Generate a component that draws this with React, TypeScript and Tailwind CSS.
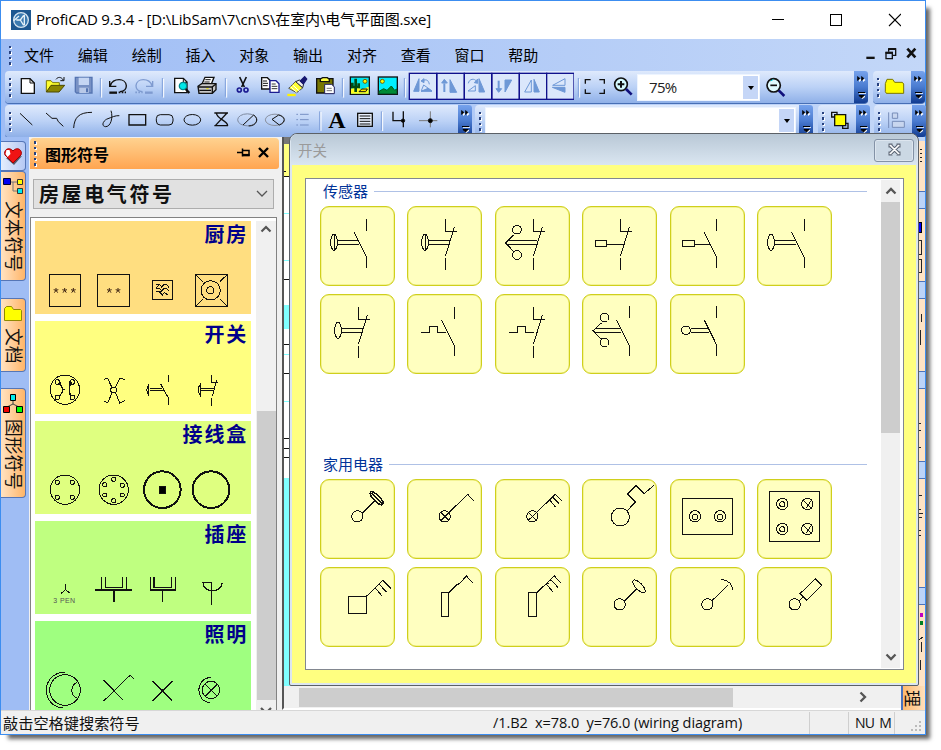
import React from 'react';

type Origin = [number, number];
const A: Origin = [0, 0];
const B: Origin = [310, 30];
const C: Origin = [620, 0];

/* Drawing cell: the artwork inside uses a grid of three units per pixel. */
function Cell({ x, y, w, h, o = A, children }: { x: number; y: number; w: number; h: number; o?: Origin; children?: React.ReactNode }) {
  return (
    <svg
      className="block shrink-0"
      width={w}
      height={h}
      viewBox={`${(x - o[0]) * 3} ${(y - o[1]) * 3} ${w * 3} ${h * 3}`}
      fill="none"
      stroke="#111"
      strokeWidth={3}
    >
      {children}
    </svg>
  );
}

function T1({ x, w, o, children }: { x: number; w: number; o?: Origin; children?: React.ReactNode }) {
  return <Cell x={x} y={71} w={w} h={32} o={o}>{children}</Cell>;
}
function T2({ x, w, o, children }: { x: number; w: number; o?: Origin; children?: React.ReactNode }) {
  return <Cell x={x} y={105} w={w} h={32} o={o}>{children}</Cell>;
}

function Grip({ n = 4 }: { n?: number }) {
  return (
    <div className="flex w-[9px] shrink-0 flex-col items-center justify-center gap-[3px] pl-[1px]">
      {Array.from({ length: n }, (_, i) => (
        <i key={i} className="block h-[2.5px] w-[2.5px] bg-[#27417f] shadow-[1px_1px_0_#fff]" />
      ))}
    </div>
  );
}

function Overflow() {
  return (
    <div className="h-full w-[14px] shrink-0 rounded-r-[3px] bg-linear-to-b from-[#76a2ec] via-[#4a7bd0] to-[#123c92]">
      <svg width="14" height="32" viewBox="0 0 14 32">
        <path d="M4 6v4l2.500-2zM8 6v4l2.500-2z" fill="#fff" transform="translate(1 1)" />
        <path d="M3.500 5.500v4l2.500-2zM7.500 5.500v4l2.500-2z" fill="#000" stroke="#000" strokeWidth=".6" />
        <path d="M5 22.500h7M6 25.500h5l-2.500 2z" fill="#fff" stroke="#fff" strokeWidth=".8" />
        <path d="M4 21.500h7M5 24.500h5l-2.500 2.500z" fill="#000" stroke="#000" strokeWidth="1" />
      </svg>
    </div>
  );
}

const bar = 'flex h-[32px] shrink-0 rounded-[4px] bg-linear-to-b from-[#dfeafc] via-[#bcd2f6] to-[#8fb0e8] shadow-[0_1px_0_#476fb5]';

const Sep = ({ x, o = A }: { x: number; o?: Origin }) => {
  const px = (x - o[0]) * 3 + 1;
  const py = (71 - o[1]) * 3;
  return (
    <>
      <path d={`M${px} ${py + 21}v56`} stroke="#7f9fda" />
      <path d={`M${px + 4} ${py + 24}v56`} stroke="#fff" />
    </>
  );
};

function TitleBar() {
  return (
    <div className="flex h-[38px] shrink-0 items-center bg-white pl-[10px]">
      <svg width="20" height="20" viewBox="0 0 60 60">
        <rect width="60" height="60" fill="#1d5790" />
        <circle cx="30" cy="30" r="22" fill="#3b7ab0" stroke="#d5e4f0" strokeWidth="4" />
        <path d="M8 32l16-14M16 30h12M28 30l10-14M28 30l10 16M40 14v32" stroke="#e6f1f8" strokeWidth="4" fill="none" />
      </svg>
      <span className="ml-[5px] w-[700px] whitespace-nowrap pb-[2px] font-['Open_Sans','Noto_Sans_CJK_SC',sans-serif] text-[15px] tracking-[-0.150px] text-black">
        ProfiCAD 9.3.4 - [D:\LibSam\7\cn\S\在室内\电气平面图.sxe]
      </span>
      <svg className="ml-auto mr-[24px] shrink-0" width="131" height="14" viewBox="0 0 131 14" fill="none" stroke="#000" shapeRendering="crispEdges">
        <path d="M2 6.500h12M60.500 1.500h11v11h-11z" />
        <path d="M119 1l12 12M131 1l-12 12" shapeRendering="auto" strokeWidth="1.100" />
      </svg>
    </div>
  );
}

function MenuBar() {
  const items = ['文件', '编辑', '绘制', '插入', '对象', '输出', '对齐', '查看', '窗口', '帮助'];
  return (
    <div className="flex h-[32px] shrink-0 items-center pl-[4px]">
      <Grip />
      <div className="flex gap-[23.800px] pb-[2px] pl-[10px] text-[15px] text-black">
        {items.map((t) => <span key={t}>{t}</span>)}
      </div>
      <div className="ml-auto">
        <Cell x={860} y={39} w={65} h={32} o={C}>
          <path d="M739 173.500h25" strokeWidth="7" />
          <path d="M806 155v-8h21v19h-8" strokeWidth="4" /><path d="M805 147h23" strokeWidth="6" />
          <path d="M798 159h19v17h-19z" strokeWidth="4" /><path d="M796 158h23" strokeWidth="6" />
          <path d="M862 146l24 26M886 146l-24 26" strokeWidth="8" />
        </Cell>
      </div>
    </div>
  );
}

function Flip({ x, children }: { x: number; children: React.ReactNode }) {
  return (
    <g transform={`translate(${x} 0)`}>
      <rect x="298" y="130" width="82" height="78" fill="#dbe7fb" stroke="#10108c" strokeWidth="4" />
      <g fill="#6e98d6" stroke="#6e98d6" strokeWidth="3">{children}</g>
    </g>
  );
}

function ToolbarOne() {
  return (
    <div className="flex h-[34px] shrink-0 pl-[4px]">
      <div className={`${bar} w-[863px]`}>
        <Grip />
        <T1 x={14} w={85}>
          <path d="M64 236h26l13 13v31H64z" fill="#fff" strokeWidth="4" /><path d="M90 236v13h13" strokeWidth="3" />
          <path d="M139 275v-33h14l5 6h20v8" fill="#ffff30" stroke="#7c7800" />
          <path d="M139 276l14-20h41l-17 20z" fill="#8b8600" stroke="#4b4800" />
          <path d="M168 238c6-8 15-8 22 2M192 231v11h-11" />
          <path d="M226 232h50v47h-46l-4-4z" fill="#7891c4" stroke="#5675b2" strokeWidth="4" />
          <path d="M236 233h31v22h-31z" fill="#c6d6f3" stroke="none" /><path d="M238 263h28v16h-28z" fill="#b9c9e8" stroke="none" /><path d="M258 265h6v12h-6z" fill="#5675b2" stroke="none" />
        </T1>
        <T1 x={99} w={70}>
          <Sep x={100} />
          <path d="M331 257c8-24 46-24 48 0 0 12-8 17-19 18M329 243v16h20" strokeWidth="4" /><path d="M328 278h23" strokeWidth="7" /><path d="M356 277h22" strokeDasharray="5 4" strokeWidth="5" />
          <g stroke="#7f9bd0"><path d="M456 257c-8-24-46-24-48 0 0 12 8 17 19 18M458 243v16h-20" strokeWidth="4" /><path d="M435 278h23" strokeWidth="7" /><path d="M406 277h22" strokeDasharray="5 4" strokeWidth="5" /></g>
          <Sep x={162} />
        </T1>
        <T1 x={169} w={60}>
          <path d="M524 235h26l11 11v32h-37z" fill="#fff" strokeWidth="4" /><path d="M550 235v12h11" />
          <circle cx="549" cy="258" r="11" fill="#00e8e8" stroke="#008b91" strokeWidth="4" /><path d="M557 267l11 12" strokeWidth="7" />
          <path d="M606 252l9-20h27l-8 20z" fill="#fff" strokeWidth="4" /><path d="M616 239h16M613 246h16" />
          <path d="M594 259l11-8h43v18l-11 11h-40z" fill="#c8c8c8" strokeWidth="4" /><path d="M594 261h42l12-9M637 261v18M598 271h35" strokeWidth="4" /><path d="M619 266h7" stroke="#e9e200" />
          <Sep x={225} />
        </T1>
        <T1 x={229} w={57}>
          <path d="M719 231l14 30M739 231l-14 30" strokeWidth="5" /><g stroke="#1b1b91" strokeWidth="5"><circle cx="718" cy="270" r="6" /><circle cx="738" cy="270" r="6" /></g>
          <path d="M785 233h17l8 8v26h-25z" fill="#fff" strokeWidth="4" /><path d="M789 243h12M789 250h15M789 257h14" />
          <path d="M810 242h18l9 9v26h-27z" fill="#fff" stroke="#1b1b91" strokeWidth="4" /><path d="M815 252h12M815 259h17M815 266h17" stroke="#333" />
        </T1>
        <T1 x={286} w={24}>
          <path d="M862 285h25" stroke="#fff200" strokeWidth="7" />
          <path d="M887 244l21 20-18 14-24-13z" fill="#ffff31" stroke="#555" /><path d="M878 255l22 20M872 260l18 17" stroke="#fff" /><path d="M887 245l11-5 13 12-3 11z" fill="#eee" stroke="#222" /><path d="M901 243l13-13 6 7-10 15z" fill="#17176f" stroke="#17176f" strokeWidth="4" />
        </T1>
        <T1 x={310} w={98} o={B}>
          <path d="M20 146h49v43H20z" fill="#777600" strokeWidth="4" /><path d="M31 154v-7l7-4h14l6 5v7z" fill="#ffff42" strokeWidth="4" /><path d="M44 163h21l8 8v20H44z" fill="#fff" stroke="#202060" /><path d="M50 175h15M50 182h16" stroke="#777" />
          <Sep x={342} o={B} />
          <rect x="121" y="141" width="57" height="52" fill="#00e5ee" strokeWidth="4" /><path d="M123 191v-15l16-4 17 6 20-8v21z" fill="#ffff20" stroke="none" /><path d="M137 146v40M127 158v13h19v-11" stroke="#004c13" strokeWidth="8" /><circle cx="165" cy="154" r="6" fill="#ff0" stroke="#796000" /><path d="M147 185l8-8h17l-5 8z" fill="#ffe400" />
          <rect x="205" y="141" width="57" height="52" fill="#00f0ff" strokeWidth="4" /><path d="M207 184l14-8 10 5 13-13 10 13 6-4v14h-53z" fill="#008b35" stroke="#006026" /><circle cx="217" cy="154" r="6" fill="#ff0" stroke="#796000" />
          <Sep x={404} o={B} />
        </T1>
        <T1 x={408} w={166} o={B}>
          <Flip x={0}><path d="M311 184l16-38v38z" /><path d="M334 182h31l-24-17zM338 153c9-7 18-3 20 10" fill="none" /><path d="M333 153l9-7v12zM333 184h33l-12-9z" /></Flip>
          <Flip x={83}><path d="M320 186v-26" strokeWidth="6" /><path d="M312 159l8-11 9 11zM337 187v-38l20 38z" /></Flip>
          <Flip x={165}><path d="M342 146v40h17z" /><path d="M309 183h22v-16zM310 160c3-14 18-16 25-6" fill="none" /><path d="M338 147v13l-10-2z" /></Flip>
          <Flip x={248}><path d="M318 152v24" strokeWidth="6" /><path d="M310 176l8 11 9-11zM337 150h20l-20 36z" /></Flip>
          <Flip x={330}><path d="M342 148v38h16z" /><path d="M334 150v36h-20z" fill="none" /></Flip>
          <Flip x={412}><path d="M315 172h38v15z" /><path d="M353 146v20h-37z" fill="none" /></Flip>
        </T1>
        <T1 x={574} w={62} o={B}>
          <Sep x={578} o={B} />
          <path d="M826 161v-12h16M868 149h15v12M826 178v12h16M868 190h15v-12" strokeWidth="4" />
          <circle cx="933" cy="163" r="19" fill="#d4faff" strokeWidth="5" /><path d="M933 153v20M923 163h20" strokeWidth="6" /><path d="M948 177l17 17" stroke="#10107c" strokeWidth="8" />
        </T1>
        <div className="ml-[1px] mt-[3px] flex h-[27px] w-[123px] items-center justify-between border border-[#edf4ff] bg-white p-[1px] pl-[11px] font-['Open_Sans',sans-serif] text-[15px] tracking-[-0.700px] text-[#222]">
          75%
          <span className="flex h-full w-[15px] items-center justify-center bg-[#c5d6f7]"><i className="h-0 w-0 border-x-[3.500px] border-t-4 border-x-transparent border-t-black" /></span>
        </div>
        <T1 x={760} w={40} o={C}>
          <circle cx="461" cy="256" r="20" fill="#e0fbff" strokeWidth="5" /><path d="M451 256h20" strokeWidth="5" /><path d="M452 243l8-5" stroke="#00c6d8" /><path d="M476 271l17 17" stroke="#10107c" strokeWidth="8" />
        </T1>
        <div className="ml-auto"><Overflow /></div>
      </div>
      <div className={`${bar} ml-[5px] w-[52px]`}>
        <Grip />
        <T1 x={882} w={29} o={C}><path d="M796 251l5-13h17l6 9h23l4 5v28h-52l-3-5z" fill="#ffff00" stroke="#7b7500" /></T1>
        <Overflow />
      </div>
    </div>
  );
}

function ToolbarTwo() {
  return (
    <div className="flex h-[32px] shrink-0 pl-[4px]">
      <div className={`${bar} w-[467px]`}>
        <Grip />
        <T2 x={14} w={296}>
          <path d="M60 340l37 35M138 339l18 16h14l5 10 15 14" />
          <path d="M221 384c2-32 16-47 55-47" />
          <path d="M333 332c7 21-1 49-17 48-15-3-4-21 8-24 11-4 22-10 34-9" />
          <path d="M387 344h50v31h-50z" strokeWidth="4" /><rect x="469" y="344" width="50" height="31" rx="12" /><ellipse cx="577" cy="359.500" rx="25" ry="16" />
          <path d="M643 339h41M684 377h-41M649 339c2 19 33 22 34 38M681 339l-35 38" strokeWidth="4" />
          <ellipse cx="742" cy="359.500" rx="29" ry="18" stroke="#7e8aa0" /><path d="M729 375l32-30c17 11 9 33-15 33" />
          <ellipse cx="825" cy="359.500" rx="29" ry="17" stroke="#8a91a0" /><path d="M836 345l-20 13 22 17c21-9 18-25-2-30z" />
          <path d="M900 343h26M900 359h26M900 375h26" stroke="#7891c4" /><path d="M889 343h5M889 359h5M889 375h5" stroke="#7891c4" />
        </T2>
        <T2 x={310} w={15} o={B}><path d="M29 244v57" stroke="#7f9fda" /><path d="M33 246v57" stroke="#fff" /></T2>
        <div className="flex w-[24px] shrink-0 items-center justify-center pb-[2px] font-['Liberation_Serif',serif] text-[24px] font-bold leading-none text-black">A</div>
        <T2 x={349} w={109} o={B}>
          <rect x="143" y="250" width="44" height="39" fill="#e8f0fd" strokeWidth="4" /><path d="M149 258h32M149 266h32M149 274h32M149 282h32" />
          <path d="M214 244v57" stroke="#7f9fda" /><path d="M218 246v57" stroke="#fff" />
          <path d="M249 245v27h30M280 244v48" strokeWidth="4" /><circle cx="279" cy="272" r="5" fill="#000" />
          <path d="M327 272h55M361 244v48" stroke="#777" /><circle cx="361" cy="272" r="6" fill="#000" />
        </T2>
        <Overflow />
      </div>
      <div className={`${bar} ml-[3px] w-[338px]`}>
        <Grip />
        <div className="ml-[1px] mt-[2px] flex h-[27px] w-[311px] justify-end border border-[#edf4ff] bg-white p-[1px]">
          <span className="flex h-full w-[15px] items-center justify-center bg-[#c5d6f7]"><i className="h-0 w-0 border-x-[3.500px] border-t-4 border-x-transparent border-t-black" /></span>
        </div>
        <div className="ml-auto"><Overflow /></div>
      </div>
      <div className={`${bar} ml-[5px] w-[52px]`}>
        <Grip />
        <T2 x={827} w={29} o={C}><path d="M635 337h16v14h-16zM668 370h16v15h-16z" strokeWidth="4" /><path d="M644 344h33v33h-33z" fill="#ffff00" strokeWidth="4" /></T2>
        <Overflow />
      </div>
      <div className={`${bar} ml-[4px] w-[52px]`}>
        <Grip />
        <T2 x={882} w={29} o={C}><g stroke="#778db9" fill="#c8d6ef"><path d="M803 337v47" /><path d="M814 339h16v16h-16zM814 364h36v18h-36z" /></g></T2>
        <Overflow />
      </div>
    </div>
  );
}

function SideTab({ h, mt, icon, text, blue }: { h: number; mt: number; icon: React.ReactNode; text?: string; blue?: boolean }) {
  return (
    <div
      className={`flex w-[25px] shrink-0 flex-col items-center rounded-r-[4px] border border-l-0 border-[#5576b6] ${blue ? 'bg-linear-to-r from-[#e4edfc] to-[#b6c9f4]' : 'bg-linear-to-r from-[#ffe3c2] to-[#ffb566]'}`}
      style={{ height: h, marginTop: mt }}
    >
      {icon}
      {text && <span className="ml-[3px] text-[17.700px] leading-[22px] text-[#111] [text-orientation:sideways] [writing-mode:vertical-rl]">{text}</span>}
    </div>
  );
}

function SideTabs() {
  return (
    <div className="flex w-[28px] shrink-0 flex-col bg-[#9fbdf4]">
      <SideTab h={30} mt={4} blue icon={
        <svg className="mt-[5px]" width="20" height="18" viewBox="0 0 20 18"><path d="M3 11l8 7 8-9" fill="#556" /><path d="M10 16L2 8C0 3 6-1 10 4c4-5 10-1 8 4z" fill="#f01414" stroke="#a00000" /><path d="M3.500 3h3l1 4-3 3-2-3z" fill="#fff" /></svg>} />
      <SideTab h={110} mt={0} text="文本符号" icon={
        <svg className="mb-[5px] mt-[6px] shrink-0" width="22" height="18" viewBox="0 0 22 18"><path d="M9 4h6M11 4v9h4" stroke="#777" fill="none" /><path d="M1.500.5h7v6h-7z" fill="#0000f0" stroke="#003" /><path d="M15.500 1.500h5v5h-5z" fill="#ff0" stroke="#333" /><path d="M15.500 10.500h5v5h-5z" fill="#0ee" stroke="#333" /></svg>} />
      <SideTab h={74} mt={17} text="文档" icon={
        <svg className="mb-[5px] mt-[6px] shrink-0" width="20" height="18" viewBox="0 0 20 18"><path d="M1.500 3.500l2-2h5l2 3h7l1 1v10h-17z" fill="#ff0" stroke="#918a00" /></svg>} />
      <SideTab h={110} mt={16} text="图形符号" icon={
        <svg className="mb-[5px] mt-[5px] shrink-0" width="22" height="20" viewBox="0 0 22 20"><path d="M11 7v3L5 13M11 10l6 3" stroke="#444" fill="none" /><path d="M8.500.5h5v6h-5z" fill="#0ee" stroke="#000" /><path d="M1.500 12.500h6v6h-6z" fill="#e00" stroke="#000" /><path d="M14.500 12.500h6v6h-6z" fill="#0f0" stroke="#000" /></svg>} />
    </div>
  );
}

/* Family strip in the symbol list: 216 x 93 with its title at the top right. */
function Family({ title, bg, vx, vy, children }: { title: string; bg: string; vx: number; vy: number; children: React.ReactNode }) {
  return (
    <div className={`relative h-[93px] w-[216px] shrink-0 ${bg}`}>
      <svg className="absolute inset-0" width="216" height="93" viewBox={`${vx} ${vy} 648 279`} fill="none" stroke="#111" strokeWidth="3" shapeRendering="crispEdges">{children}</svg>
      <div className="pr-[3px] pt-[1px] text-right text-[20px] font-bold leading-[24px] tracking-[1.800px] text-[#00008b]">{title}</div>
    </div>
  );
}

function SymbolPanel() {
  return (
    <div className="flex w-[251px] shrink-0 flex-col bg-[#f0f0f0]">
      <div className="mx-[1px] mt-[1px] flex h-[31px] shrink-0 items-center rounded-t-[4px] rounded-br-[3px] bg-linear-to-b from-[#ffd28f] to-[#ffa550]">
        <Grip n={5} />
        <span className="ml-[6px] text-[16px] font-bold text-black">图形符号</span>
        <svg className="mb-[2px] ml-auto mr-[8px]" width="34" height="14" viewBox="0 0 34 14" fill="none" stroke="#000">
          <path d="M0 6.500h5M5.500 2.500v8M6 4.500h6v5H6" strokeWidth="1.500" /><path d="M6 9h6.500" strokeWidth="2.200" /><path d="M22 2l9 9M31 2l-9 9" strokeWidth="2.400" />
        </svg>
      </div>
      <div className="ml-[4px] mt-[10px] flex h-[30px] w-[241px] shrink-0 items-center justify-between border-[1.500px] border-[#adadad] bg-[#e1e1e1] pl-[5px] pr-[5px] text-[20px] font-bold tracking-[2.600px] text-[#111]">
        房屋电气符号
        <svg width="12" height="8" viewBox="0 0 12 8"><path d="M1 1l5 5 5-5" fill="none" stroke="#555" strokeWidth="1.300" /></svg>
      </div>
      <div className="ml-[1px] mt-[8px] flex min-h-0 w-[247px] flex-1 overflow-hidden border border-b-0 border-[#828282] bg-white pl-[4px] pt-[3px]">
        <div className="flex w-[216px] flex-col gap-[7px]">
          <Family title="厨房" bg="bg-[#ffde80]" vx={105} vy={273}>
            <path d="M147 433h95v95h-95zM292 433h96v95h-96zM458 451h58v58h-58zM586 433h97v97h-97zM586 433l22 22M683 433l-24 22M586 530l24-24M683 530l-24-24" />
            <circle cx="632" cy="481" r="29" /><circle cx="631" cy="481" r="11" />
            <path d="M469 463h9l7 8 8-8h6l8 9M469 474h9l7 8 9-8h5l8 9M469 485h9l9 10 6-8 12 9M478 463l-9 11M488 478l-9 12" />
            <g stroke="#3b2010" strokeWidth="3" shapeRendering="auto">
              {[168, 194, 220, 328, 354].map((x) => <path key={x} d={`M${x} 474v7M${x - 7} 479l7 2 7-2M${x - 5} 488l5-7 5 7`} />)}
            </g>
          </Family>
          <Family title="开关" bg="bg-[#ffff80]" vx={105} vy={4}>
            <circle cx="195" cy="210" r="44" /><circle cx="172" cy="187" r="7" /><circle cx="217" cy="187" r="7" /><circle cx="172" cy="233" r="7" /><circle cx="217" cy="233" r="7" />
            <path d="M176 192c16 12 16 26 0 38M213 192c-8 14-8 24 0 38" strokeWidth="4" /><path d="M176 194l8-6M209 195v-9l8 6M190 210h5" />
            <path d="M311 179l12-3 13 28M374 179l-15-3-13 28M311 243l12 7 13-30M374 243l-15 7-12-30" /><circle cx="341" cy="211" r="9" />
            <path d="M504 166v22M504 256v-23l-22-40M449 206h38M449 213h42" /><path d="M446 195q-11 15 0 31zM445 196v29" />
            <path d="M635 166v23h20M650 180l-13 50M635 235v25M602 206h40M602 213h40" /><path d="M600 195q-11 15 0 31zM600 196v29" />
          </Family>
          <Family title="接线盒" bg="bg-[#dfff80]" vx={105} vy={304}>
            <circle cx="195" cy="510" r="44" /><circle cx="341" cy="510" r="44" />
            {[[172, 488], [217, 488], [172, 533], [217, 533], [341, 479], [314, 495], [367, 497], [314, 526], [367, 526], [341, 543]].map(([x, y]) => <circle key={`${x}-${y}`} cx={x} cy={y} r="6" />)}
            <circle cx="487" cy="510" r="55" strokeWidth="6" /><circle cx="633" cy="510" r="55" strokeWidth="6" /><path d="M477 500h20v21h-20z" fill="#000" />
          </Family>
          <Family title="插座" bg="bg-[#bfff80]" vx={105} vy={35}>
            <path d="M196 225v16l-12 11M197 241l12 10" />
            <text x="160" y="282" fontSize="21" fontFamily="Liberation Sans, sans-serif" fill="#555" stroke="none" textLength="65">3 PEN</text>
            <path d="M285 242h112M305 204v38M316 204v31h52v-31M380 204v38M342 242v36M451 204v38h76v-38M462 204v31h53v-31M488 242v36" strokeWidth="4" />
            <path d="M635 286v-66h-26c0 29 52 36 58 0" strokeWidth="4" />
          </Family>
          <Family title="照明" bg="bg-[#9fff80]" vx={105} vy={334}>
            <circle cx="195" cy="541" r="46" /><path d="M195 487c-74 4-74 103-5 108M232 517c-22 10-22 41 0 49" />
            <path d="M311 511l59 61M311 574l79-77 12 10M457 514l59 58M457 574l60-60" /><path d="M484 537h8v8h-8z" fill="#111" stroke="none" />
            <circle cx="633" cy="541" r="26" /><path d="M615 523l37 37M652 523l-37 37M634 503c-49 2-49 71-5 76" />
          </Family>
        </div>
        <div className="ml-[5px] flex w-[20px] flex-col items-center bg-[#f0f0f0]">
          <svg className="mt-[3px] shrink-0" width="12" height="10" viewBox="0 0 12 10"><path d="M1.500 7.500L6 3l4.500 4.500" fill="none" stroke="#555" strokeWidth="2.200" /></svg>
          <div className="mt-[177px] h-[289px] w-[19px] shrink-0 bg-[#cdcdcd]" />
          <svg className="mt-[7px] shrink-0" width="12" height="8" viewBox="0 0 12 8"><path d="M1 1l5 5 5-5" fill="none" stroke="#555" strokeWidth="2.200" /></svg>
        </div>
      </div>
    </div>
  );
}

/* Symbol button. vb is the origin of the artwork's grid. */
function Card({ vb, children }: { vb: string; children: React.ReactNode }) {
  return (
    <div className="h-[80px] w-[75px] rounded-[9px] border-[1.500px] border-[#cfcf1c] bg-[#ffffc0] shadow-[inset_0_0_0_0.500px_#e8e86a]">
      <svg className="-ml-[1px] -mt-[1px] block" width="75" height="80" viewBox={`${vb} 225 240`} fill="none" stroke="#111" strokeWidth="3" shapeRendering="crispEdges">{children}</svg>
    </div>
  );
}

/* Contacts are drawn relative to the upper terminal's position. */
const OpenContact = ({ x, y }: { x: number; y: number }) => <path d={`M${x} ${y}v36M${x - 37} ${y + 41}l37 75v33`} />;
const ClosedContact = ({ x, y }: { x: number; y: number }) => <path d={`M${x} ${y}v39h36M${x + 28} ${y + 26}l-27 87M${x} ${y + 117}v37`} />;

function GroupHeading({ text }: { text: string }) {
  return (
    <div className="flex h-[20px] shrink-0 items-center gap-[6px] pl-[17px] text-[15px] leading-[20px] text-[#003399]">
      {text}
      <div className="mr-[14px] h-px flex-1 bg-[#afc1e6]" />
    </div>
  );
}

function Popup() {
  return (
    <div className="absolute left-[289px] top-[133px] flex h-[553px] w-[630px] flex-col rounded-t-[8px] rounded-b-[2px] border-[1.500px] border-[#5b6066] bg-[#dce6f0] px-[1px] pb-[2px]">
      <div className="flex h-[31px] shrink-0 items-center justify-between rounded-t-[6px] bg-linear-to-b from-[#b9c8d6] to-[#dae6f1] pl-[7px] pr-[3px] text-[14.500px] text-[#9a9a9a]">
        <span className="pt-[2px]">开关</span>
        <div className="mt-[1px] flex h-[23px] w-[40px] items-center justify-center rounded-[3px] border border-[#8392a6] bg-[#cbd8e4] shadow-[inset_0_0_0_1px_#dde6ef]">
          <svg className="mb-[2px]" width="15" height="13" viewBox="0 0 15 13"><path d="M3 2l9 9M12 2L3 11M1.500 2.500h4M9.500 2.500h4M1.500 10.500h4M9.500 10.500h4" stroke="#5a6372" strokeWidth="3.800" /><path d="M3.500 2.500l8 8M11.500 2.500l-8 8M2.500 2.500h2M10.500 2.500h2M2.500 10.500h2M10.500 10.500h2" stroke="#fff" strokeWidth="1.700" /></svg>
        </div>
      </div>
      <div className="mx-[1px] flex min-h-0 flex-1 bg-[#ffff80] pb-[13px] pl-[13px] pr-[12px] pt-[13px]">
        <div className="flex flex-1 border border-[#828790] bg-white">
          <div className="flex flex-1 flex-col pt-[2px]">
            <GroupHeading text="传感器" />
            <div className="ml-[13.600px] mt-[5px] grid h-[168px] w-[513px] shrink-0 grid-cols-[repeat(6,75px)] gap-x-[12.500px] gap-y-[7.500px]">
              <Card vb="120 229"><OpenContact x={260} y={267} /><path d="M172 333h62M172 343h66" /><ellipse cx="162" cy="338" rx="10" ry="24" /><path d="M162 315v46" /></Card>
              <Card vb="382 229"><ClosedContact x={496} y={267} /><path d="M446 333h64M446 343h62" /><ellipse cx="436" cy="338" rx="10" ry="24" /><path d="M436 315v46" /></Card>
              <Card vb="645 229"><ClosedContact x={759} y={267} /><path d="M770 333h-86l-8 7 8 5h86M677 340l24-24M677 340l24 26" /><circle cx="711" cy="300" r="13" /><circle cx="711" cy="376" r="13" /></Card>
              <Card vb="7 109"><ClosedContact x={121} y={147} /><path d="M46 212h34v19H46zM80 223h53" /></Card>
              <Card vb="270 109"><OpenContact x={410} y={147} /><path d="M308 212h35v19h-35zM343 223h48" /></Card>
              <Card vb="532 109"><OpenContact x={673} y={147} /><path d="M584 213h65M584 223h66" /><ellipse cx="574" cy="218" rx="10" ry="24" /></Card>
              <Card vb="120 491"><ClosedContact x={234} y={529} /><path d="M184 595h64M184 605h62" /><ellipse cx="174" cy="600" rx="10" ry="24" /></Card>
              <Card vb="382 491"><OpenContact x={523} y={529} /><path d="M424 606h25v-19h25v19h26" /></Card>
              <Card vb="645 491"><ClosedContact x={759} y={529} /><path d="M686 606h25v-19h25v19h25" /></Card>
              <Card vb="7 372"><OpenContact x={148} y={409} /><path d="M122 475H49l-10 8 8 4h78M40 483l25-24M40 483l26 25" /><circle cx="75" cy="443" r="13" /><circle cx="75" cy="518" r="13" /></Card>
              <Card vb="270 372"><OpenContact x={410} y={409} /><path d="M332 475h53M332 487h56" /><circle cx="318" cy="481" r="13" /></Card>
            </div>
            <div className="mt-[80px]" />
            <GroupHeading text="家用电器" />
            <div className="ml-[13.600px] mt-[5px] grid h-[168px] w-[513px] shrink-0 grid-cols-[repeat(6,75px)] gap-x-[12.500px] gap-y-[7.500px]">
              <Card vb="120 117"><circle cx="232" cy="229" r="17" /><path d="M245 221l41-40" /><g transform="rotate(45 290 175)"><ellipse cx="290" cy="175" rx="26" ry="9" strokeWidth="4" /><path d="M268 175h45" /></g></Card>
              <Card vb="382 117"><circle cx="495" cy="229" r="17" /><path d="M484 217l23 24M484 241l80-78 20 21" /></Card>
              <Card vb="645 117"><circle cx="757" cy="229" r="17" /><path d="M745 217l24 24M745 241l81-78 21 21M818 171l19 20M809 180l18 22" /></Card>
              <Card vb="37 117"><circle cx="152" cy="231" r="27" /><path d="M172 213l25-27-23-24 25-25 24 24 29-24" /></Card>
              <Card vb="300 117"><path d="M338 174h149v109H338z" /><circle cx="375" cy="229" r="17" /><circle cx="375" cy="231" r="8" /><circle cx="450" cy="229" r="17" /><circle cx="450" cy="231" r="8" /></Card>
              <Card vb="562 117"><path d="M600 155h148v148H600z" /><circle cx="638" cy="192" r="17" /><circle cx="638" cy="193" r="8" /><circle cx="638" cy="267" r="17" /><circle cx="638" cy="268" r="8" /><circle cx="713" cy="192" r="17" /><circle cx="713" cy="267" r="17" /><path d="M700 180l26 26M724 182l-14 22M700 255l26 26M724 257l-14 22" /></Card>
              <Card vb="120 379"><path d="M206 466h52v51h-52zM258 468l51-49 24 24M297 430l23 25M286 442l20 24" /></Card>
              <Card vb="382 379"><path d="M484 456h21v72h-21zM506 458l27-27 7-2 20-23 20 21" /></Card>
              <Card vb="645 379"><path d="M746 456h22v72h-22zM768 458l55-52 21 22M811 416l23 24M799 430l20 24" /><path d="M797 428h9M808 419h8" /></Card>
              <Card vb="37 379"><circle cx="150" cy="491" r="17" /><path d="M164 481l37-36" /><ellipse cx="208" cy="437" rx="25" ry="10" transform="rotate(45 208 437)" /></Card>
              <Card vb="300 379"><circle cx="412" cy="491" r="17" /><path d="M425 481l50-49M454 415c23 5 34 16 34 34" /></Card>
              <Card vb="562 379"><circle cx="675" cy="491" r="17" /><path d="M687 481l14-13M691 459l46-45 19 20-45 45z" /></Card>
            </div>
          </div>
          <div className="mb-[1px] mr-[3px] mt-[1px] flex w-[19px] flex-col items-center bg-[#f0f0f0]">
            <svg className="mt-[7px] shrink-0" width="12" height="8" viewBox="0 0 12 8"><path d="M1.500 6.500L6 2l4.500 4.500" fill="none" stroke="#555" strokeWidth="2.300" /></svg>
            <div className="mt-[7px] h-[231px] w-full shrink-0 bg-[#cdcdcd]" />
            <svg className="mb-[7px] mt-auto shrink-0" width="12" height="8" viewBox="0 0 12 8"><path d="M1.500 1.500L6 6l4.500-4.500" fill="none" stroke="#555" strokeWidth="2.300" /></svg>
          </div>
        </div>
      </div>
    </div>
  );
}

function Workspace() {
  return (
    <div className="flex min-w-0 flex-1 flex-col bg-[#f0f0f0] pl-[2px]">
      <div className="flex h-[549px] shrink-0 justify-between">
        <svg width="8" height="549" viewBox="282 137 8 549" shapeRendering="crispEdges">
          <path d="M282 137h8v549h-8z" fill="#fff" /><path d="M284 137h6v7h-6z" fill="#777" /><path d="M284 144h6v32h-6z" fill="#ffff80" />
          <path d="M284 305h6v24h-6zM284 478h6v208h-6z" fill="#80ffff" />
          <path d="M284 213.500h6M284 260.500h6M284 354.500h6M284 401.500h6" stroke="#80ffff" />
          <path d="M284 176.500h6M284 279.500h6M284 344.500h6M284 373.500h6M284 438.500h6M284 448.500h6M284 457.500h6M284 171.500h2" stroke="#111" />
          <path d="M283 137v549" stroke="#555" strokeWidth="2" />
        </svg>
        <svg width="8" height="549" viewBox="917 137 8 549" shapeRendering="crispEdges">
          <path d="M917 137h8v549h-8z" fill="#ffe3c4" />
          {[191, 281, 371, 461, 587].map((y) => <path key={y} d={`M917 ${y}.5h9v17h-9z`} fill="#bcd3f8" stroke="#4a72bc" />)}
          <path d="M917 137h8v4h-8z" fill="#bcd3f8" /><path d="M920 149.500h2M920 153.500h2M920 157.500h2M920 161.500h2" stroke="#222" />
          <path d="M919 222h3v11h-3z" fill="#00f" /><path d="M919 222.500h2.500v10h-2.500" fill="none" stroke="#000" />
          <path d="M919 240.500h2.500v14h-2.500M919 259.500h2.500v13h-2.500M921.500 314v8M920.500 330v15M919 423h2M919 430h2M919 447h2M919 495h3M919 509h2M919 513h4M919 517h3M919 530h2M919 535h2M919 640l4-3M921.500 642v10M920.500 660v10" fill="none" stroke="#222" />
          <path d="M920 613h3v4h-3z" fill="#c000c0" /><path d="M920 621h3v4h-3z" fill="#008020" />
        </svg>
      </div>
      <div className="flex min-h-0 flex-1">
        <div className="flex h-full flex-1 items-start border-b-2 border-b-white border-l-2 border-l-[#555] pl-[15px] pt-[2px]">
          <div className="h-[19px] w-[434px] bg-[#cdcdcd]" />
          <svg className="ml-auto mr-[34px] mt-[3px]" width="8" height="12" viewBox="0 0 8 12"><path d="M1.500 1.500L6 6l-4.500 4.500" fill="none" stroke="#555" strokeWidth="2.300" /></svg>
        </div>
        <div className="flex w-[24px] shrink-0 items-center border-l-2 border-[#4a72bc] bg-linear-to-r from-[#ffba6d] to-[#ffe0bb] pl-[1px] text-[17px] leading-[18px] text-[#111]"><span className="[text-orientation:sideways] [writing-mode:vertical-rl]">理</span></div>
      </div>
    </div>
  );
}

function StatusBar() {
  return (
    <div className="flex h-[24px] shrink-0 items-center border-t border-[#d7d7d7] bg-[#f0f0f0] text-[15.200px] text-[#111]">
      <span className="w-[491px] shrink-0 pl-[2px]">敲击空格键搜索符号</span>
      <span className="w-[318px] shrink-0 whitespace-pre border-r border-[#cfcfcf] pl-[1px] font-['Open_Sans',sans-serif] text-[14.500px] leading-[22px] tracking-[-0.080px]">/1.B2  x=78.0  y=76.0 (wiring diagram)</span>
      <span className="h-[22px] w-[39px] shrink-0 border-r border-[#cfcfcf]" />
      <span className="flex h-[22px] w-[46px] shrink-0 items-center gap-[5px] border-r border-[#cfcfcf] pl-[6px] font-['Open_Sans',sans-serif] text-[14px] tracking-[-0.800px]"><span>NU</span><span>M</span></span>
      <svg className="ml-auto mr-[3px] mt-[7px]" width="11" height="11" viewBox="0 0 11 11" fill="#bbb"><path d="M8 0h2v2H8zM8 4h2v2H8zM4 4h2v2H4zM0 8h2v2H0zM4 8h2v2H4zM8 8h2v2H8z" /></svg>
    </div>
  );
}

export default function App() {
  return (
    <div className="relative h-[750px] w-[941px] overflow-hidden bg-white font-['Noto_Sans_CJK_SC',sans-serif] leading-none">
      <div className="flex h-[735px] w-[926px] flex-col border border-[#3c8df0] bg-linear-to-r from-[#9fbdf5] to-[#c3d7f8] shadow-[6px_6px_4px_-2px_rgba(0,0,0,0.600)]">
        <TitleBar />
        <MenuBar />
        <ToolbarOne />
        <ToolbarTwo />
        <div className="flex min-h-0 flex-1">
          <SideTabs />
          <SymbolPanel />
          <Workspace />
        </div>
        <StatusBar />
      </div>
      <Popup />
    </div>
  );
}
